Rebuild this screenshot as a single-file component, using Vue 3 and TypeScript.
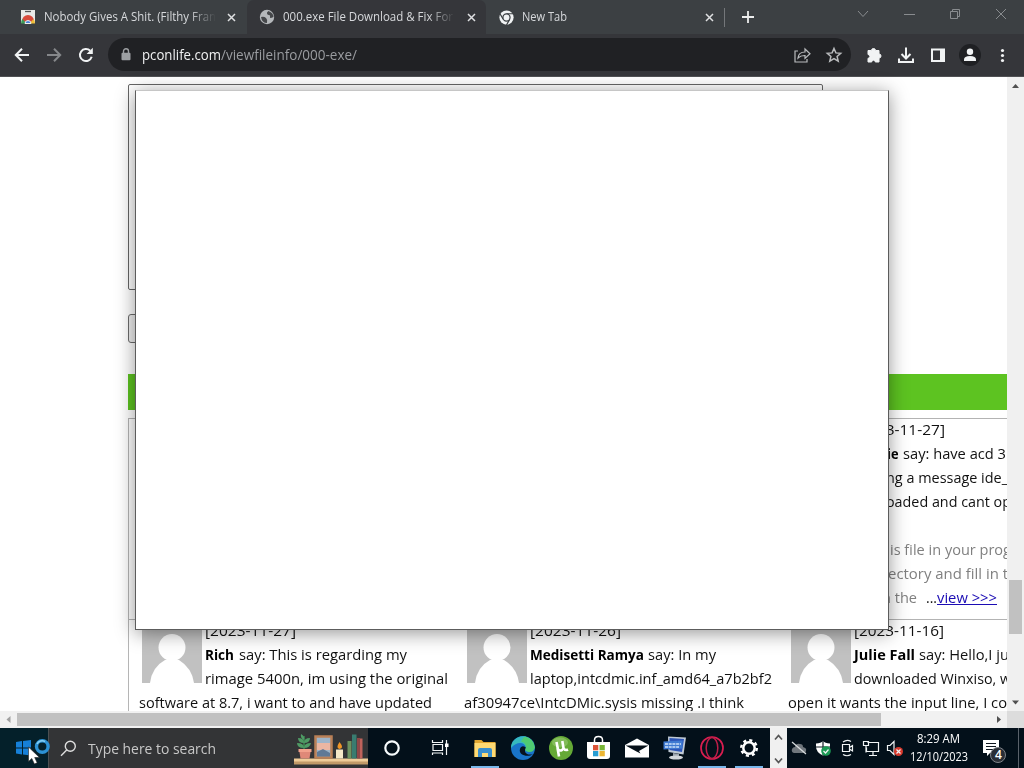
<script setup lang="ts">
interface Seg { t: string; w: number; k?: string; gap?: number }
interface Comment { avatar: boolean; lines: { pad: number; segs: Seg[] }[] }

// Stretches a run of text to a given width in pixels.
const vFit = {
  mounted(el: HTMLElement, b: { value: number }) {
    const natural = el.getBoundingClientRect().width
    el.style.transform = `scaleX(${b.value / natural})`
    el.style.marginRight = `${b.value - natural}px`
  },
}

const latest: Comment = {
  avatar: false,
  lines: [
    { pad: 66, segs: [{ t: '[2023-11-27]', w: 91 }] },
    { pad: 99, segs: [{ t: 'ie', w: 11.5, k: 'b' }, { t: 'say: have acd 3', w: 103, gap: 4 }] },
    { pad: 98, segs: [{ t: 'ng a message ide_', w: 122 }] },
    { pad: 98, segs: [{ t: 'oaded and cant op', w: 125 }] },
    { pad: 0, segs: [] },
    { pad: 102, segs: [{ t: 'is file in your prog', w: 121, k: 'g' }] },
    { pad: 100, segs: [{ t: 'ectory and fill in t', w: 120, k: 'g' }] },
    { pad: 94, segs: [{ t: 'n the', w: 35, k: 'g' }, { t: '...', w: 11, gap: 9 }, { t: 'view >>>', w: 60, k: 'a' }] },
  ],
}
const comments: Comment[] = [
  { avatar: true, lines: [
    { pad: 66, segs: [{ t: '[2023-11-27]', w: 91 }] },
    { pad: 66, segs: [{ t: 'Rich', w: 29, k: 'b' }, { t: 'say: This is regarding my', w: 168, gap: 5 }] },
    { pad: 66, segs: [{ t: 'rimage 5400n, im using the original', w: 243 }] },
    { pad: 0, segs: [{ t: 'software at 8.7, i want to and have updated', w: 293 }] } ] },
  { avatar: true, lines: [
    { pad: 66, segs: [{ t: '[2023-11-26]', w: 91 }] },
    { pad: 66, segs: [{ t: 'Medisetti Ramya', w: 114, k: 'b' }, { t: 'say: In my', w: 68, gap: 4 }] },
    { pad: 66, segs: [{ t: 'laptop,intcdmic.inf_amd64_a7b2bf2', w: 242 }] },
    { pad: 0, segs: [{ t: 'af30947ce\\IntcDMic.sysis missing .I think', w: 280 }] } ] },
  { avatar: true, lines: [
    { pad: 66, segs: [{ t: '[2023-11-16]', w: 90 }] },
    { pad: 66, segs: [{ t: 'Julie Fall', w: 61, k: 'b' }, { t: 'say: Hello,I ju', w: 90, gap: 4 }] },
    { pad: 66, segs: [{ t: 'downloaded Winxiso, w', w: 157 }] },
    { pad: 0, segs: [{ t: 'open it wants the input line, I co', w: 219 }] } ] },
]
const cells: Comment[] = [{ avatar: false, lines: [] }, { avatar: false, lines: [] }, latest, ...comments]
</script>

<template>
  <div class="screen">
    <header class="tabs">
      <div class="tab t1">
        <svg width="16" height="16" viewBox="0 0 16 16"><path d="M1 1h14v13H1z" fill="#e9e9e7"/><path d="M5 2.500h6" stroke="#555" stroke-width="1.3"/><path d="M2 12a6 6 0 0 1 12 0l-3 1H5z" fill="#d84a3b"/><path d="M1 14.500q0-3 1.500-4.500l4 4.500z" fill="#3d9b57"/><path d="M15 14.500q0-3-1.500-4.500l-4 4.500z" fill="#eebd37"/><path d="M5 14.500a3 3 0 0 1 6 0z" fill="#4a83d8" stroke="#eee"/></svg>
        <div class="title"><span v-fit="172" class="fit">Nobody Gives A Shit. (Filthy Fran</span></div>
        <svg class="x" width="9" height="9" viewBox="0 0 9 9"><path d="M1 1l7 7M8 1L1 8" stroke="#dfe0e2" stroke-width="1.5"/></svg>
      </div>
      <div class="tab t2">
        <svg width="16" height="16" viewBox="0 0 16 16"><circle cx="8" cy="8" r="7.2" fill="#b5b8bb"/><path d="M2 8q3-1 5 1t1 5q-5 0-6-6zM9.500 2q-2 1-1.500 2.500t2 1.500 1 2 3.500 0q0-4-5-6z" fill="#45474a"/></svg>
        <div class="title"><span v-fit="170" class="fit">000.exe File Download &amp; Fix For</span></div>
        <svg class="x" width="9" height="9" viewBox="0 0 9 9"><path d="M1 1l7 7M8 1L1 8" stroke="#dfe0e2" stroke-width="1.5"/></svg>
      </div>
      <div class="tab t3">
        <svg width="15" height="15" viewBox="0 0 16 16"><circle cx="8" cy="8" r="7.6" fill="#f1f3f4"/><path d="M8 4h7M4.5 9.7L1 4M11.4 10L8 16" stroke="#3c4043" stroke-width="1.3"/><circle cx="8" cy="8" r="3.8" fill="#f1f3f4" stroke="#3c4043" stroke-width="1.3"/><circle cx="8" cy="8" r="2" fill="#f1f3f4"/></svg>
        <div class="title plain"><span v-fit="45" class="fit">New Tab</span></div>
        <svg class="x" width="9" height="9" viewBox="0 0 9 9"><path d="M1 1l7 7M8 1L1 8" stroke="#dfe0e2" stroke-width="1.5"/></svg>
      </div>
      <svg class="plus" width="12" height="12" viewBox="0 0 12 12"><path d="M6 0v12M0 6h12" stroke="#eceded" stroke-width="1.8"/></svg>
      <svg class="win" width="160" height="28" viewBox="0 0 160 28" fill="none" stroke="#898c8f"><path d="M10 11l5 5.5 5-5.5M56 14.5h11M102.500 11.500h7v7h-7zM104.500 11.500v-2h7v7h-2M148 9l10 10M158 9l-10 10"/></svg>
    </header>

    <div class="toolbar">
      <svg class="nav" width="108" height="42" viewBox="0 34 108 42" fill="none" stroke="#f1f3f4" stroke-width="2"><path d="M29 55H16M22 48.800L15.800 55l6.200 6.200"/><path d="M47 55h13M54 48.800L60.200 55 54 61.200" stroke="#85878a"/><path d="M90.200 50.800A6 6 0 1 0 91.700 56.800"/><path d="M92.800 47.800v6.200h-6.200z" fill="#f1f3f4" stroke="none"/></svg>
      <div class="omni">
        <svg width="10" height="13" viewBox="0 0 10 13"><path d="M2.500 5V3.300a2.500 2.500 0 0 1 5 0V5" fill="none" stroke="#9da0a3" stroke-width="1.400"/><rect x=".5" y="4.700" width="9" height="7.500" rx="1" fill="#9da0a3"/></svg>
        <div class="url"><span v-fit="79" class="fit host">pconlife.com</span><span v-fit="136" class="fit">/viewfileinfo/000-exe/</span></div>
        <svg class="share" width="50" height="18" viewBox="0 0 50 18" fill="none" stroke="#babcbe" stroke-width="1.200"><path d="M4 5H1v11h12v-3M4 12q.5-6 7-6V3l5 4.700-5 4.700V9.500Q6.500 9.400 4 12z"/><path d="M40 2.500l1.900 4.400 4.800.4-3.600 3.200 1.100 4.700L40 12.700l-4.200 2.500 1.100-4.700-3.600-3.200 4.800-.4z" stroke-width="1.500"/></svg>
      </div>
      <svg class="acts" width="173" height="42" viewBox="851 34 173 42" fill="#f1f3f4"><path d="M868 50.500h3.500a2 2 0 0 1 4 0h3.500v3.500a2 2 0 0 1 0 4v4h-3.700a1.800 1.800 0 0 0-3.600 0H868v-3.700a1.800 1.800 0 0 0 0-3.800z" stroke="#f1f3f4"/><path d="M906 47.500v11M901.500 54l4.500 4.500 4.500-4.500M899 58.500v3.500h14v-3.500" fill="none" stroke="#f1f3f4" stroke-width="2"/><path fill-rule="evenodd" d="M931 48.500h14v13.500h-14zm2 2v9.500h7v-9.500z"/><circle cx="970" cy="55" r="11" fill="#1f2023"/><circle cx="970" cy="51.800" r="3.200"/><path d="M964 61v-1.500q0-3.500 6-3.500t6 3.500V61z"/><circle cx="1002.500" cy="50.500" r="1.600"/><circle cx="1002.500" cy="55.500" r="1.600"/><circle cx="1002.500" cy="60.500" r="1.600"/></svg>
    </div>

    <div class="middle">
      <main class="page">
        <div class="area"></div>
        <div class="btn"></div>
        <div class="green"></div>
        <div class="list">
          <div v-for="(c, i) in cells" :key="i" class="cell">
            <svg v-if="c.avatar" class="avatar" width="60" height="60" viewBox="0 0 60 60"><path d="M0 0h60v60H0z" fill="#c1c1c1"/><circle cx="30" cy="24.500" r="13.500" fill="#fff"/><path d="M8 60q2-16 15-23h14q13 8 15 23z" fill="#fff"/></svg>
            <div v-for="(l, j) in c.lines" :key="j" class="line" :style="{ paddingLeft: l.pad + 'px' }"><span v-for="(s, n) in l.segs" :key="n" class="seg" :style="{ marginLeft: (s.gap || 0) + 'px' }"><span v-fit="s.w" class="fit" :class="s.k">{{ s.t }}</span></span></div>
          </div>
        </div>
      </main>
      <div class="vbar">
        <svg width="17" height="17"><path d="M5 11l3.500-4 3.500 4z" fill="#505050"/></svg>
        <div class="vthumb"></div>
        <svg width="17" height="17"><path d="M5 6.500l3.500 4 3.500-4z" fill="#505050"/></svg>
      </div>
    </div>
    <div class="hbar">
      <svg width="17" height="17"><path d="M10.500 5l-4 3.500 4 3.500z" fill="#a0a0a0"/></svg>
      <div class="hthumb"></div>
      <svg class="right" width="17" height="17"><path d="M7 5l4 3.500L7 12z" fill="#505050"/></svg>
      <div class="corner"></div>
    </div>

    <footer class="task">
      <div class="start"></div>
      <div class="search">
        <svg width="17" height="17" viewBox="0 0 17 17" fill="none" stroke="#dedede" stroke-width="1.400"><circle cx="10.300" cy="6.300" r="5"/><path d="M6.700 10L1 15.800"/></svg>
        <div class="ph"><span v-fit="128" class="fit">Type here to search</span></div>
        <svg class="shelf" width="74" height="36" viewBox="294 732 74 36"><path d="M294 760h74v4.500h-74z" fill="#c29a68"/><path d="M294 758.500h74v3h-74z" fill="#efcc98"/><path d="M304 751v-15" stroke="#39754c" stroke-width="2"/><g fill="#4f9b65"><path d="M304 740q-4-2-3-6 4 2 3 6zM304 743q-6 0-6-5 6 0 6 5zM304 743q6 0 6-5-6 0-6 5zM304 748q-7 0-7-5 7 0 7 5zM304 748q6 0 7-5-7 0-7 5z"/></g><path d="M299 749h12l-1.500 9.500h-9z" fill="#df8878"/><path d="M298.500 749h13v3h-13z" fill="#f2a18c"/><path d="M315.500 736.500h16v21h-16z" fill="#9db4c9" stroke="#ba8057" stroke-width="2.500"/><path d="M317 743h13v7h-13z" fill="#ebb6a2"/><path d="M317 752l6-3 7 4v3.500h-13z" fill="#5f7996"/><path d="M336 749.500h7v9h-7z" fill="#f5e8c8"/><path d="M339.500 742q5 6 0 7-4-1 0-7z" fill="#f19626"/><path d="M347.500 741h4v17.500h-4z" fill="#6d9360"/><path d="M352 734.500h4.500v24H352z" fill="#397c70"/><path d="M357 738h3v20.500h-3z" fill="#8f4747"/><path d="M360 738.500h2.500v20H360z" fill="#c0625b"/></svg>
      </div>
      <svg class="apps" width="402" height="40" viewBox="368 728 402 40">
        <circle cx="392" cy="748" r="6.700" fill="none" stroke="#f7fbfc" stroke-width="2.200"/>
        <path d="M432.500 740v2.500h10V740M432.500 755v-2h10v2M433 744.500h9.500v6H433zM446.500 740v15" fill="none" stroke="#f2f5f6" stroke-width="1.200"/><path d="M445 743.500h3.500v3.500H445z" fill="#fff"/>
        <path d="M474.500 740h7l2 2h12v15h-21z" fill="#e2a731"/><path d="M474.500 743h21v14h-21z" fill="#ffda73"/><path d="M478 757v-7q0-2 2-2h10q2 0 2 2v7h-4v-4h-6v4z" fill="#398fce"/>
        <circle cx="523" cy="748" r="12" fill="#1974c9"/><path d="M511 748c0-9 10-15 18-10 4 3 5 7 5 10l-8 0c-1-6-9-7-15 0z" fill="#36b9be"/><path d="M526 748c-3 4 1 8 7 6-5 4-15 1-13-5 1-4 5-3 6-1z" fill="#07131e"/><path d="M525 736.500q9 2 10 11-2 6-8 4-3-1-1-4 0-5-5-6 2-4 4-5z" fill="#4fcb72"/>
        <circle cx="561" cy="748" r="12" fill="#65a936"/><ellipse cx="560" cy="742.500" rx="8" ry="5" fill="#98c973" opacity=".6"/><path d="M556.500 742l1.500 7.500q3.500 2.500 5.500-1.500l-1.200-7M563.500 748q1.500 3 4.500 1.500M557.500 748l1.500 8.500" fill="none" stroke="#fff" stroke-width="2.600"/>
        <path d="M594.500 742v-2q0-3.500 4-3.500t4 3.500v2" fill="none" stroke="#fff" stroke-width="1.500"/><path d="M587 742h23v14q0 3-3 3h-17q-3 0-3-3z" fill="#fff"/><path d="M593 745h5.300v5.300H593z" fill="#dc5438"/><path d="M599.500 745h5.300v5.300h-5.300z" fill="#78b637"/><path d="M593 751h5.300v5.300H593z" fill="#279dd3"/><path d="M599.500 751h5.300v5.300h-5.300z" fill="#edb633"/>
        <path d="M625 745l12-6.500 12 6.500v12.500h-24z" fill="#fff"/><path d="M625.500 745.500h23L639 751l1.500 2.500-4-2z" fill="#061019"/>
        <path d="M668 736.500l18 1-2.500 17-15-2.500z" fill="#bfc9d4"/><path d="M669.500 738l14.500 1-2 13-12.500-2z" fill="#2d56b8"/><path d="M663.500 741.500l19-1v8l-19 1z" fill="#3f7ad2"/><path d="M665 744h16M665 747h14" stroke="#d0e2fa" stroke-width="1.300" stroke-dasharray="3 .7"/><path d="M673 753l6 1v3h-6z" fill="#9ba4ad"/><ellipse cx="676" cy="757.500" rx="7" ry="2" fill="#d2d6da"/>
        <circle cx="712" cy="748" r="11" fill="none" stroke="#d91e50" stroke-width="1.700"/><ellipse cx="712" cy="748" rx="5.800" ry="10.500" fill="none" stroke="#bd1e48" stroke-width="1.500"/>
        <circle cx="749" cy="748" r="5.700" fill="none" stroke="#fff" stroke-width="2.500"/><circle cx="749" cy="748" r="7.800" fill="none" stroke="#fff" stroke-width="2.400" stroke-dasharray="3.063 3.063"/>
        <path d="M471 766h28v2h-28zM698 766h28v2h-28zM735 766h28v2h-28z" fill="#79b7eb"/>
      </svg>
      <svg class="spin" width="17" height="40"><path d="M5 11.500l3.500-4 3.500 4M5 30.500l3.500 4 3.500-4" fill="none" stroke="#555" stroke-width="1.700"/></svg>
      <svg class="tray" width="122" height="40" viewBox="787 728 122 40" fill="none" stroke="#f1f4f5" stroke-width="1.200">
        <path d="M794 753q-3-1-2-4 1-2 3-2 1-4 5-3 3 0 3 3 4 1 3 4 0 2-2 2z" fill="#70777d" stroke="none"/><path d="M792 742l14 12" stroke="#d9dddf"/>
        <path d="M816 743.500q5-.5 7-2.500 2 2 7 2.500v3q0 6-7 9-7-3-7-9z" fill="#fff" stroke="none"/><path d="M823 741v14M816 747h14" stroke="#172129"/><circle cx="826" cy="751" r="4.800" fill="#1c9a55" stroke="none"/><path d="M823.500 751l2 2 3-3.500"/>
        <path d="M842.500 744.500h7v7h-7zM849.500 747.500l3-2v5.500l-3-2M843 742q4-3 8-.5M843 754.500q4 2.500 8 0"/>
        <path d="M867.500 742.500h11v9h-12v-4M873 752v3M869 755.500h8M863.500 741.500h5v4h-5zM866 745.500v7"/>
        <path d="M887.500 745.500h2.500l4-4v13l-4-4h-2.500z"/><circle cx="898.500" cy="751.500" r="4.500" fill="#d8392d" stroke="none"/><path d="M896.500 749.500l4 4M900.500 749.500l-4 4"/>
      </svg>
      <div class="clock"><div><span v-fit="43" class="fit">8:29 AM</span></div><div><span v-fit="58" class="fit">12/10/2023</span></div></div>
      <div class="note"><svg width="34" height="28" viewBox="980 736 34 28"><path d="M983 740h16v13h-9l-3 3v-3h-4z" fill="#fff"/><path d="M986 743.500h10M986 746.500h10M986 749.500h7" stroke="#101820" stroke-width="1.200"/><circle cx="998" cy="755" r="7.500" fill="#292e36" stroke="#80848a"/></svg><span class="count">4</span></div>
    </footer>

    <div class="popup"></div>
    <svg class="pointer" width="40" height="32" viewBox="14 736 40 32"><path d="M16 742l6-1v6.500h-6zM23 741l8-1v7.500h-8zM16 748.500h6v6l-6-1zM23 748.500h8v7l-8-1z" fill="#1680d8"/><circle cx="42.300" cy="746.500" r="5.800" fill="none" stroke="#2c92d5" stroke-width="3.400"/><path d="M37 744a5.800 5.800 0 0 1 8-2.500" fill="none" stroke="#86cff4" stroke-width="1.500"/><path d="M28.500 747v14.500l3.300-3 2.600 5.500 2.800-1.200-2.500-5.300h4.800z" fill="#fff" stroke="#222" stroke-width=".6"/></svg>
  </div>
</template>

<style>
html, body { background: #fff; overflow: hidden; }
</style>
<style scoped>
.screen { position: relative; width: 1024px; height: 768px; overflow: hidden; display: flex; flex-direction: column; font-family: "Open Sans", "Noto Sans", sans-serif; background: #fff; }
svg { display: block; flex: none; }
.fit { display: inline-block; white-space: pre; transform-origin: 0 50%; }
.tabs { height: 34px; flex: none; background: #3c4043; display: flex; color: #d7d9dc; font-size: 12px; line-height: 34px; }
.tab { display: flex; align-items: center; box-sizing: border-box; height: 34px; }
.t1 { width: 247px; padding-left: 20px; }
.t2 { width: 239px; padding-left: 12px; background: #35363a; border-radius: 7px 7px 0 0; }
.t3 { width: 240px; padding-left: 13px; }
.t3::after { content: ""; width: 1px; height: 19px; background: #74777a; margin-left: 10px; }
.title { width: 173px; margin-left: 8px; overflow: hidden; white-space: nowrap; -webkit-mask-image: linear-gradient(to right, #000 145px, transparent 172px); mask-image: linear-gradient(to right, #000 145px, transparent 172px); }
.plain { width: 175px; -webkit-mask-image: none; mask-image: none; }
.x { margin-left: 10px; }
.t2 .x { margin-left: 11px; }
.t3 .x { margin-left: 8px; }
.plus { margin: 11px 0 0 16px; }
.win { margin-left: 94px; }
.toolbar { height: 43px; box-sizing: border-box; border-bottom: 1px solid #505154; flex: none; background: #35363a; display: flex; }
.omni { width: 743px; height: 33px; margin-top: 4px; border-radius: 17px; background: #202124; display: flex; align-items: center; box-sizing: border-box; padding-left: 13px; }
.url { margin-left: 11px; color: #9a9ca0; font-size: 14px; line-height: 33px; width: 652px; white-space: nowrap; }
.host { color: #f0f1f2; }
.middle { display: flex; height: 634px; flex: none; }
.page { width: 1007px; overflow: hidden; box-sizing: border-box; padding: 7px 0 0 128px; background: #fff; }
.area { width: 695px; height: 206px; box-sizing: border-box; border: 1px solid #666; border-radius: 2px; }
.btn { width: 90px; height: 29px; box-sizing: border-box; border: 1px solid #6d6d6d; border-radius: 3px; background: #efefef; margin-top: 24px; }
.green { height: 36.5px; margin-top: 30.5px; background: #5dc321; }
.list { margin-top: 8px; width: 984px; border-left: 1px solid #b5b5b5; display: grid; grid-template-columns: 325px 324px 335px; grid-template-rows: 201px 201px; }
.cell { border-top: 1px solid #b3b3b3; padding-left: 10px; }
.avatar { float: left; margin: 3px -63px 0 3px; }
.line { height: 24px; line-height: 24px; font-size: 15px; color: #111; white-space: nowrap; position: relative; top: -2px; }
.seg { display: inline-block; }
.b { font-weight: 700; color: #000; }
.g { color: #808080; }
.a { color: #1b0cb4; text-decoration: underline; }
.vbar { width: 17px; background: #f0f0f0; display: flex; flex-direction: column; }
.vthumb { width: 13px; height: 54px; margin: 486px 2px 60px; background: #c1c1c1; }
.hbar { height: 17px; flex: none; background: #f1f1f1; display: flex; align-items: center; }
.hthumb { width: 864px; height: 13px; background: #c1c1c1; }
.right { margin-left: 109px; }
.corner { width: 17px; height: 17px; background: #dcdcdc; }
.task { height: 40px; flex: none; display: flex; background: #03101a; color: #fff; }
.start { width: 48px; background: #04202a; }
.search { width: 320px; background: #333436; display: flex; align-items: center; box-sizing: border-box; border-left: 1px solid #4c5052; }
.search > svg:first-child { margin-left: 11px; }
.ph { width: 206px; margin-left: 11px; color: #c8c8c8; font-size: 15px; }
.shelf { margin-top: 4px; }
.spin { background: #f0f0f0; }
.clock { width: 59px; font-size: 12px; line-height: 18px; padding-top: 2px; text-align: center; white-space: nowrap; }
.note { margin-left: 12px; padding-top: 8px; width: 39px; position: relative; border-right: 1px solid #59616a; margin-right: 4px; box-sizing: border-box; }
.count { position: absolute; left: 15px; top: 17px; font-size: 12px; line-height: 20px; width: 8px; font-weight: 600; }
.popup { position: absolute; left: 135px; top: 90px; width: 754px; height: 540px; box-sizing: border-box; background: #fff; border: 1px solid #5c5c5c; border-top-color: #c6c6c6; box-shadow: 0 3px 18px rgba(0, 0, 0, .42); }
.pointer { position: absolute; left: 14px; top: 736px; }
</style>
